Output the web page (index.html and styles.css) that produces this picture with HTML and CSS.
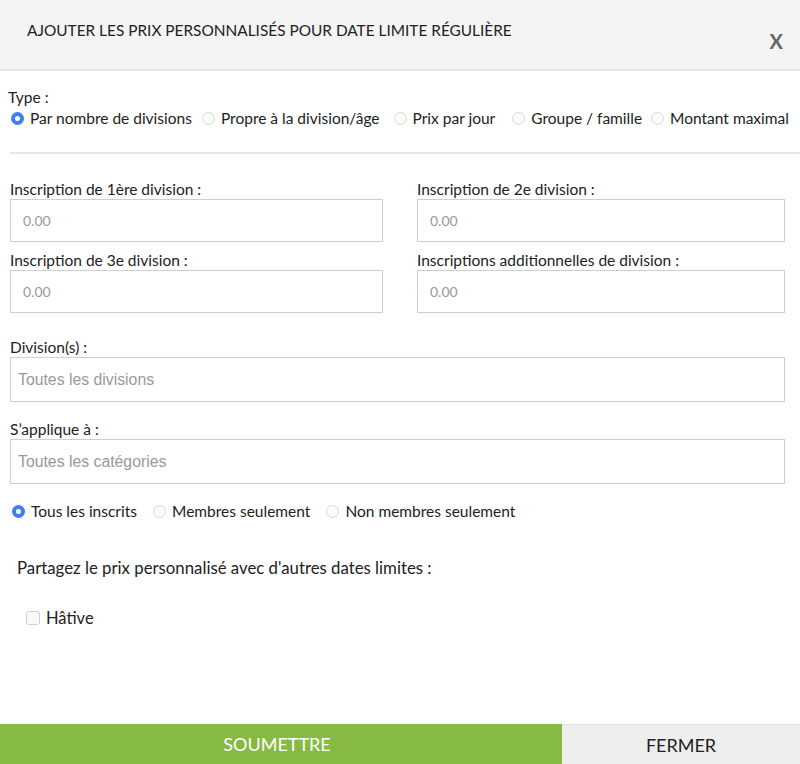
FILE: index.html
```html
<!DOCTYPE html>
<html lang="fr">
<head>
<meta charset="utf-8">
<title>Prix personnalisés</title>
<link rel="stylesheet" href="styles.css">
</head>
<body>
<div class="modal">
  <header class="modal-header">
    <h1 class="modal-title">AJOUTER LES PRIX PERSONNALISÉS POUR DATE LIMITE RÉGULIÈRE</h1>
    <span class="close">X</span>
  </header>
  <main class="modal-body">
    <div class="type-block">
      <div class="type-label">Type :</div>
      <div class="radio-row type-row">
        <label class="radio"><span class="dot on"></span>Par nombre de divisions</label>
        <label class="radio"><span class="dot"></span>Propre à la division/âge</label>
        <label class="radio"><span class="dot"></span>Prix par jour</label>
        <label class="radio"><span class="dot"></span>Groupe / famille</label>
        <label class="radio"><span class="dot"></span>Montant maximal</label>
      </div>
    </div>
    <hr class="sep">
    <div class="grid">
      <div class="field">
        <div class="label">Inscription de 1ère division :</div>
        <div class="input small">0.00</div>
      </div>
      <div class="field">
        <div class="label">Inscription de 2e division :</div>
        <div class="input small">0.00</div>
      </div>
      <div class="field">
        <div class="label">Inscription de 3e division :</div>
        <div class="input small">0.00</div>
      </div>
      <div class="field">
        <div class="label">Inscriptions additionnelles de division :</div>
        <div class="input small">0.00</div>
      </div>
    </div>
    <div class="field wide first">
      <div class="label">Division(s) :</div>
      <div class="input select">Toutes les divisions</div>
    </div>
    <div class="field wide">
      <div class="label">S’applique à :</div>
      <div class="input select">Toutes les catégories</div>
    </div>
    <div class="radio-row members">
      <label class="radio"><span class="dot on"></span>Tous les inscrits</label>
      <label class="radio"><span class="dot"></span>Membres seulement</label>
      <label class="radio"><span class="dot"></span>Non membres seulement</label>
    </div>
    <div class="share">Partagez le prix personnalisé avec d'autres dates limites :</div>
    <label class="check"><span class="box"></span>Hâtive</label>
  </main>
  <footer class="modal-footer">
    <button class="btn submit">SOUMETTRE</button>
    <button class="btn close-btn">FERMER</button>
  </footer>
</div>
</body>
</html>
```

FILE: styles.css
```css
* { box-sizing: border-box; }
html, body { margin: 0; padding: 0; }
body {
  font-family: Lato, "Open Sans", sans-serif;
  color: #222;
  background: #fff;
}
.modal {
  display: flex;
  flex-direction: column;
  height: 100vh;
}
.modal-header {
  height: 71px;
  background: #f4f4f4;
  border-bottom: 2px solid #e8e8e8;
  display: flex;
  justify-content: space-between;
  align-items: flex-start;
  padding: 0 17px 0 27px;
}
.modal-title {
  margin: 21px 0 0;
  font-size: 15.4px;
  font-weight: 400;
  color: #222;
  letter-spacing: 0;
}
.close {
  margin-top: 29px;
  font-size: 20px;
  font-weight: 700;
  color: #666;
}
.modal-body {
  padding: 16px 15px 0 10px;
  font-size: 15.5px;
}
.type-block { margin-left: -2px; }
.type-label { line-height: 20px; }
.radio-row {
  display: flex;
  align-items: center;
  line-height: 20px;
  margin-top: 1px;
}
.radio {
  display: flex;
  align-items: center;
  white-space: nowrap;
}
.type-row .radio:nth-child(1) { margin-right: 7px; }
.type-row .radio:nth-child(2) { margin-right: 11px; }
.type-row .radio:nth-child(3) { margin-right: 14px; }
.type-row .radio:nth-child(4) { margin-right: 6px; }
.dot {
  width: 13px;
  height: 13px;
  border-radius: 50%;
  border: 1px solid #d9d9d9;
  background: #fbfbfb;
  margin: 0 6px 0 3px;
  flex: none;
}
.dot.on {
  border: 4px solid #3b7ff0;
  background: #fff;
}
.sep {
  border: 0;
  height: 2px;
  background: #e6e6e6;
  margin: 24px -15px 0 0;
}
.grid {
  display: grid;
  grid-template-columns: 373px 1fr;
  column-gap: 34px;
  row-gap: 8px;
  margin-top: 25px;
}
.label {
  line-height: 20px;
  color: #222;
}
.input {
  border: 1px solid #cfcfcf;
  height: 43px;
  display: flex;
  align-items: center;
  padding-left: 12px;
  color: #999;
  background: #fff;
}
.input.small { font-size: 14px; }
.field.wide.first { margin-top: 24px; }
.field.wide + .field.wide { margin-top: 17px; }
.input.select {
  height: 45px;
  padding-left: 7px;
  font-family: "Liberation Sans", Arial, sans-serif;
  font-size: 15.8px;
  color: #999;
}
.members {
  margin-top: 17px;
  margin-left: -1px;
}
.members .radio { margin-right: 13px; }
.share {
  margin: 37px 0 0 7px;
  font-size: 16.8px;
  line-height: 20px;
}
.check {
  display: flex;
  align-items: center;
  margin: 30px 0 0 16px;
  font-size: 16.5px;
  line-height: 20px;
}
.box {
  width: 14px;
  height: 14px;
  border: 1px solid #d0d0d0;
  border-radius: 3px;
  background: #fafafa;
  margin-right: 6px;
}
.modal-footer {
  margin-top: auto;
  display: flex;
  height: 40px;
}
.btn {
  border: 0;
  font-family: Lato, sans-serif;
  font-size: 18px;
  padding: 0;
  height: 40px;
  cursor: pointer;
}
.submit {
  width: 562px;
  padding-right: 8px;
  background: #87ba42;
  color: #fff;
}
.close-btn {
  flex: 1;
  background: #eeeeee;
  color: #222;
  border-top: 1px solid #e2e2e2;
}
```
